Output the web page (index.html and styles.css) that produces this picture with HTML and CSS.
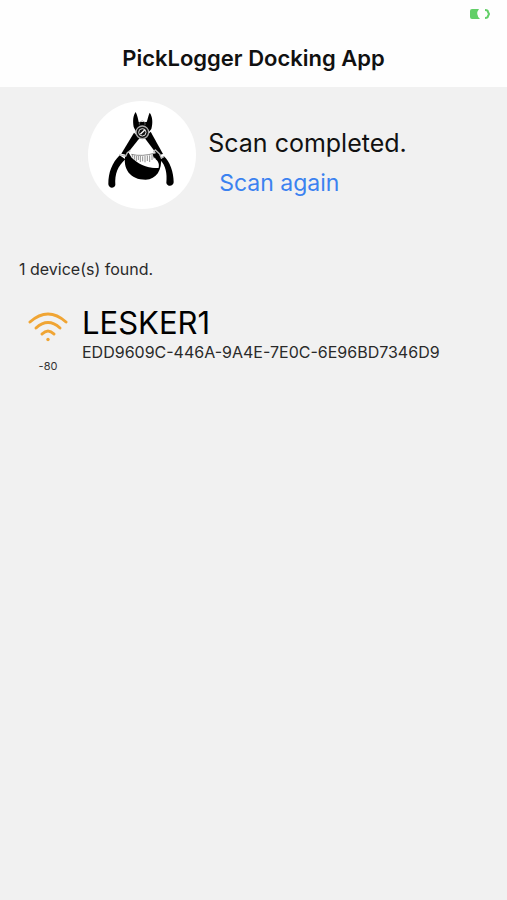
FILE: index.html
```html
<!DOCTYPE html>
<html lang="en">
<head>
  <meta charset="UTF-8" />
  <title>PickLogger Docking App</title>
  <meta name="viewport" content="width=device-width, initial-scale=1.0" />
  <link rel="stylesheet" href="styles.css">
</head>
<body>
  <!-- HEADER -->
  <header class="header">
    <div class="status-bar">
      <svg class="battery" viewBox="0 0 20 10" aria-hidden="true">
        <path d="M2 0H9Q5 5 10 10H2Q0 10 0 8V2Q0 0 2 0Z" fill="#62cf68" />
        <path d="M15 1Q18 1 18 3L19 5L18 7Q18 9 15 9" fill="none" stroke="#62cf68" stroke-width="2" />
      </svg>
    </div>
    <h1 class="title">PickLogger Docking App</h1>
  </header>

  <main class="content">
    <!-- SCAN STATUS -->
    <section class="scan">
      <svg class="logo" viewBox="24 32 324 324" role="img" aria-label="PickLogger logo">
        <circle cx="186" cy="194" r="162" fill="#fff" />
        <path d="M167 65C159 76 158 91 161 110L172 132H201L214 116C219 98 218 79 209 67C205 75 203 87 200 95H176C174 86 172 74 167 65Z" />
        <path d="M162 127L124 190L139 193L179 143Z" />
        <path d="M212 124L249 191L233 195L194 143Z" />
        <path d="M119 195C96 218 85 246 85 282C87 295 103 295 106 284C104 251 113 228 136 207Z" />
        <path d="M251 197C270 214 281 245 281 276C280 289 262 290 259 278C262 249 257 226 241 209Z" />
        <path d="M137 190C126 235 151 268 197 268C229 266 247 240 243 199C237 191 231 187 226 187V209C233 213 237 222 235 233C202 235 173 221 154 201L146 187Z" />
        <path d="M154 192Q187 202 226 188V206C237 214 238 224 235 233C204 232 174 218 154 200Z" fill="#fff" />
        <path d="M157 193V201M163 195V208M169 197V212M175 197V209M181 197V215M188 198V213M195 197V216M202 196V212M209 195V215M216 193V209M222 191V205M154 192Q187 200 225 188" fill="none" stroke="#555" stroke-width="2" />
        <path d="M218 192L229 189V205L221 201Z" />
        <path d="M118 193L137 198L142 187L151 181M252 199L244 203L239 191L226 179L220 185" fill="none" stroke="#bbb" stroke-width="4" />
        <circle cx="187" cy="126" r="19" fill="#111" stroke="#aaa" stroke-width="4" />
        <circle cx="187" cy="126" r="11" fill="#111" stroke="#ddd" stroke-width="3" />
        <path d="M181 132L194 119" stroke="#fff" stroke-width="4" />
        <path d="M178 103V96Q187 87 195 96V104" fill="none" stroke="#888" stroke-width="2" />
      </svg>
      <div class="scan-info">
        <p class="scan-status">Scan completed.</p>
        <button class="scan-button" type="button">Scan again</button>
      </div>
    </section>

    <!-- DEVICE LIST -->
    <p class="found">1 device(s) found.</p>
    <ul class="devices">
      <li class="device">
        <div class="signal">
          <svg class="wifi" viewBox="0 0 40 30" aria-hidden="true">
            <g fill="none" stroke="#f0a534" stroke-width="3" stroke-linecap="round">
              <path d="M2 10Q20 -6 38 10" />
              <path d="M8 16Q20 5 32 16" />
              <path d="M14 22Q20 16 26 22" />
            </g>
            <circle cx="20" cy="27.5" r="1.7" fill="#f0a534" />
          </svg>
          <span class="rssi">-80</span>
        </div>
        <div class="device-info">
          <h2 class="device-name">LESKER1</h2>
          <p class="device-id">EDD9609C-446A-9A4E-7E0C-6E96BD7346D9</p>
        </div>
      </li>
    </ul>
  </main>
</body>
</html>
```
FILE: styles.css
```css
html, body {
  margin: 0;
  padding: 0;
  min-height: 100vh;
  font-family: Inter, -apple-system, BlinkMacSystemFont, 'Helvetica Neue', Arial, sans-serif;
  background: #f1f1f1;
  color: #111;
}
h1, h2, p, ul {
  margin: 0;
  padding: 0;
}
.header {
  background: #fefefe;
}
.status-bar {
  display: flex;
  justify-content: flex-end;
  padding: 9px 17px 0;
}
.battery {
  width: 20px;
  height: 10px;
}
.title {
  padding: 25px 0 15px;
  font-size: 22px;
  line-height: 28px;
  font-weight: 600;
  text-align: center;
}
.content {
  padding: 14px 19px;
}
.scan {
  display: flex;
  justify-content: center;
  gap: 12px;
  padding-right: 12px;
}
.logo {
  width: 108px;
  height: 108px;
}
.scan-info {
  display: flex;
  flex-direction: column;
  align-items: flex-start;
  padding-top: 26px;
}
.scan-status {
  font-size: 25px;
  line-height: 32px;
}
.scan-button {
  margin-top: 8px;
  padding: 0 11px;
  border: none;
  background: none;
  color: #3b82f0;
  font-family: inherit;
  font-size: 23px;
  line-height: 32px;
  cursor: pointer;
}
.found {
  margin-top: 50px;
  font-size: 16px;
  line-height: 20px;
  color: #2a2a2a;
}
.devices {
  margin-top: 25px;
  list-style: none;
}
.device {
  display: flex;
  gap: 14px;
  padding-left: 9px;
}
.signal {
  display: flex;
  flex-direction: column;
  align-items: center;
  padding-top: 8px;
}
.wifi {
  width: 40px;
  height: 30px;
}
.rssi {
  margin-top: 16px;
  font-size: 11px;
  line-height: 16px;
  color: #333;
}
.device-name {
  font-size: 31px;
  line-height: 38px;
  font-weight: 400;
  color: #000;
}
.device-id {
  font-size: 16px;
  line-height: 20px;
  color: #2a2a2a;
}
```
